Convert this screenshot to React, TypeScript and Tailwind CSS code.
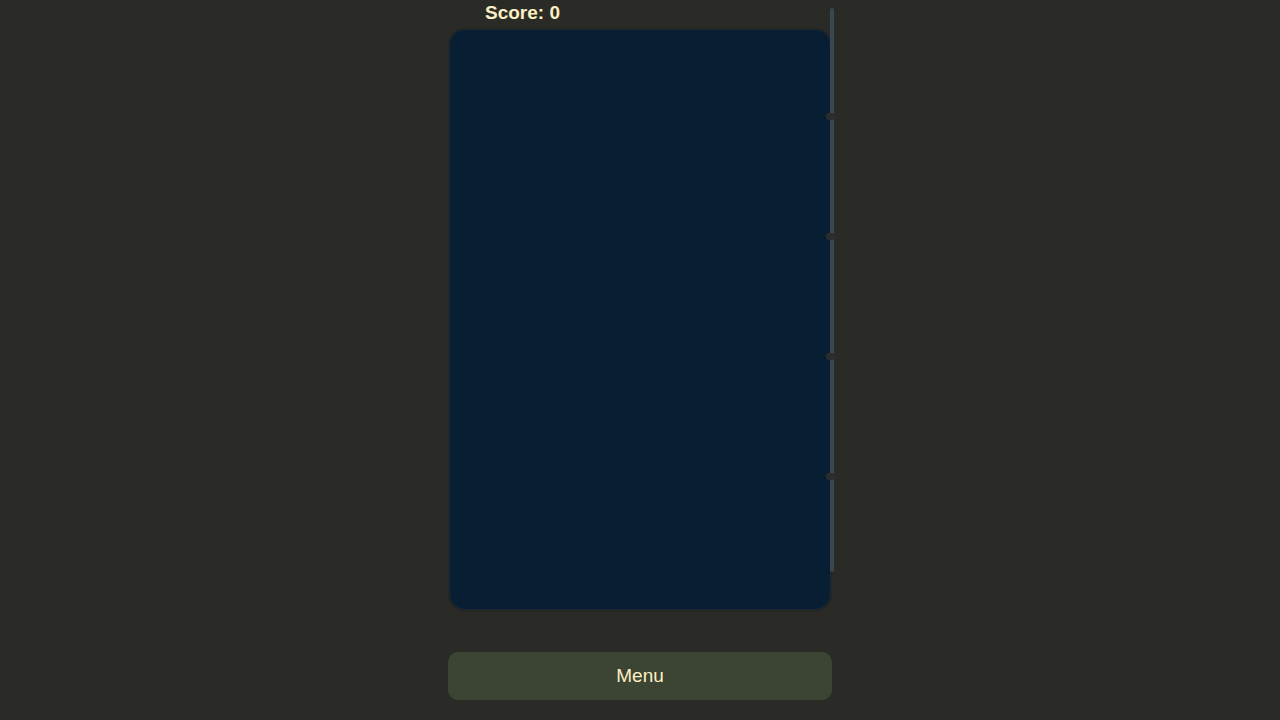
const TICKS = [116, 236, 356, 476];

export default function App() {
  return (
    <div
      className="w-full h-[720px] bg-[#2a2b27] overflow-hidden flex justify-center"
      style={{ fontFamily: '"Liberation Sans", Arial, sans-serif' }}
    >
      <div className="relative w-[384px] flex flex-col">
        <div className="h-[29px] pl-[37px] text-[19px] leading-[25px] font-bold text-[#fcefc2]">
          Score: 0
        </div>
        <div className="mx-px h-[581px] rounded-[16px] bg-[#081f33] border border-[#1c2a33] shadow-[0_0_2px_rgba(0,0,0,0.5)]" />
        <button className="mt-[42px] h-[48px] w-full rounded-[10px] bg-[#3c4534] text-[19px] text-[#fcefc2]">
          Menu
        </button>

        {/* right-hand track */}
        <div className="absolute left-[382px] top-[8px] h-[564px] w-[4px] rounded-full bg-[#3a4652]" />
        {TICKS.map((y) => (
          <div
            key={y}
            className="absolute left-[378px] h-[7px] w-[9px] rounded-full bg-[#2a2d2d]"
            style={{ top: y - 3 }}
          />
        ))}
      </div>
    </div>
  );
}
